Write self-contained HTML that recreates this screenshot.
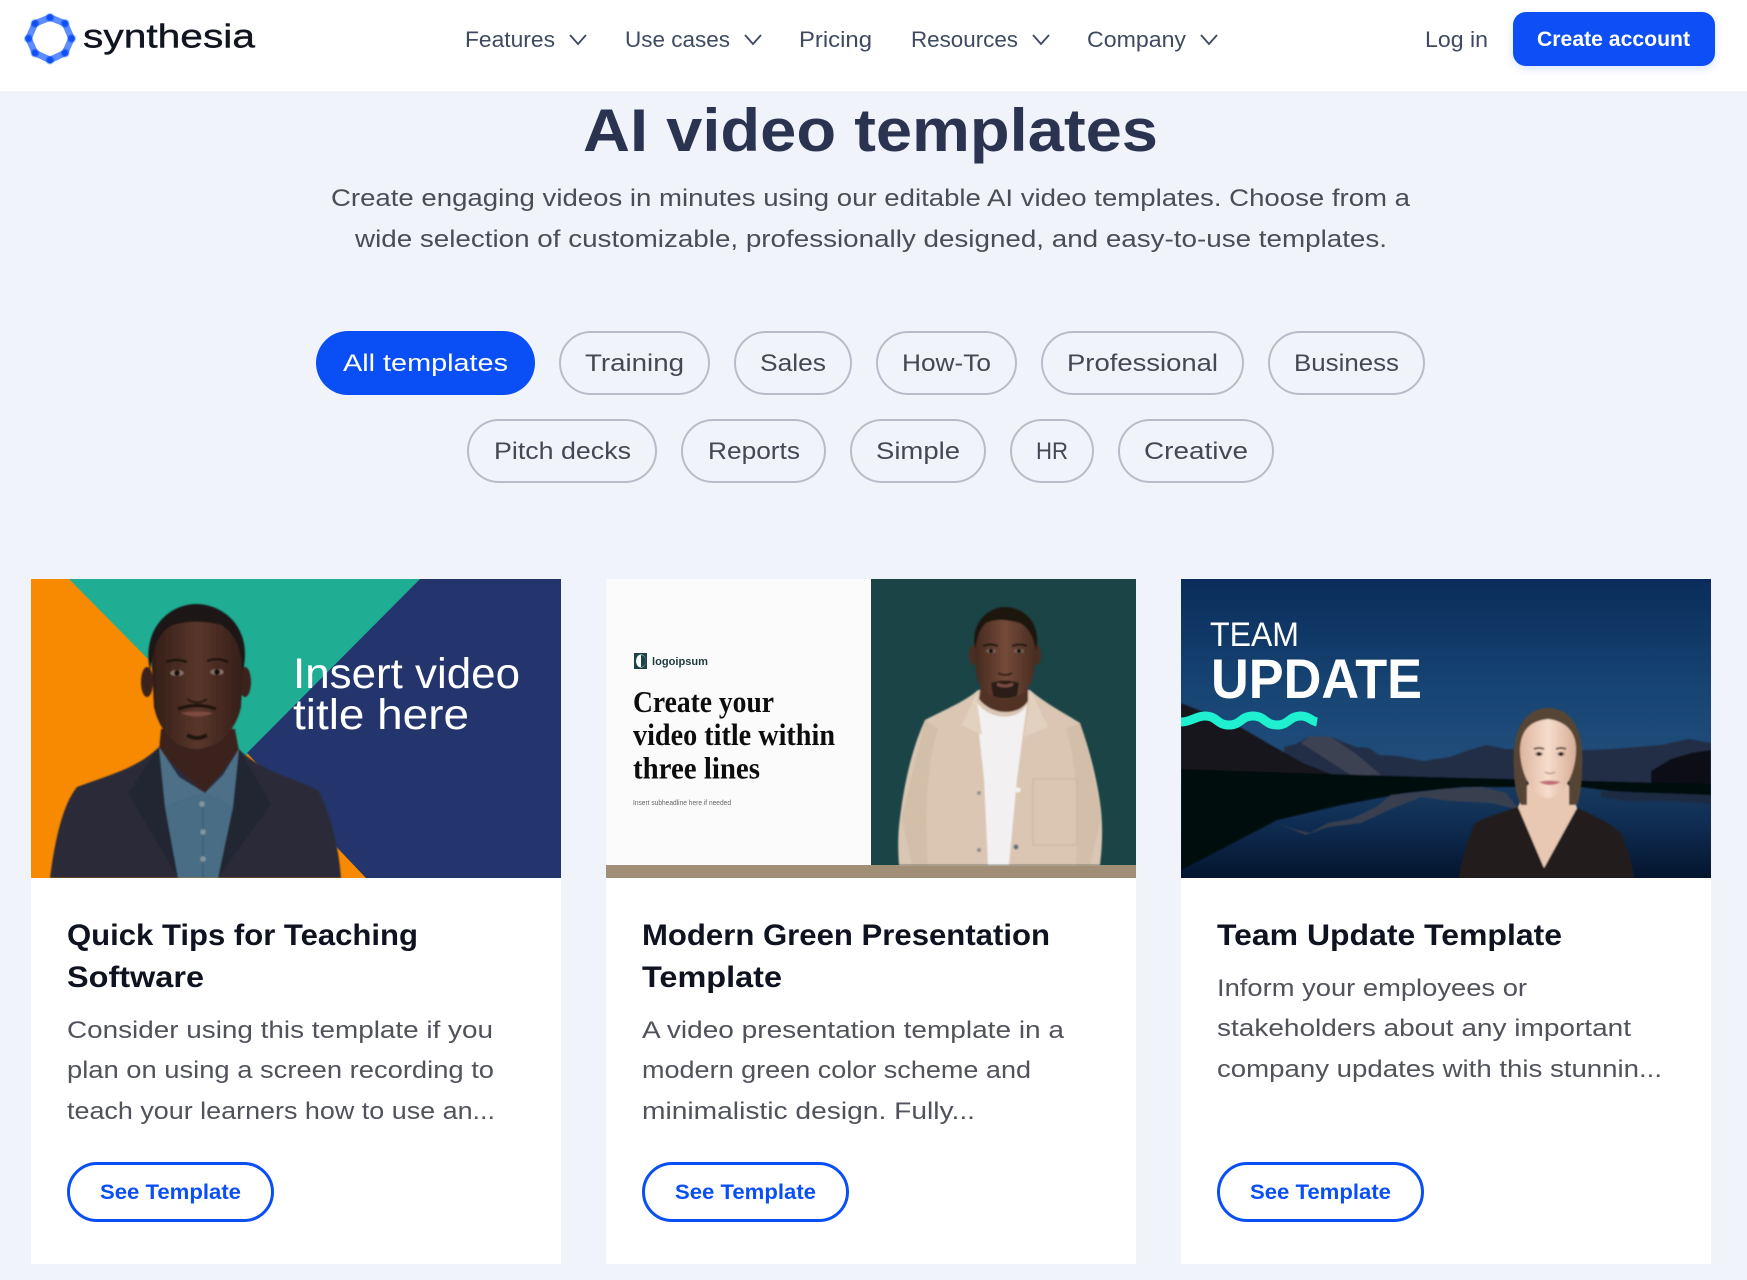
<!DOCTYPE html>
<html lang="en">
<head>
<meta charset="utf-8">
<title>AI video templates</title>
<style>
html,body{margin:0;padding:0;background:#f0f3fa;width:1747px;height:1280px;overflow:hidden}
svg{display:block}
text{font-family:"Liberation Sans",sans-serif}
.nav{font-size:22px;fill:#3f4a60}
.para{font-size:24px;fill:#4a4c58}
.pill{fill:none;stroke:#b8bcc9;stroke-width:2}
.pt{font-size:24px;fill:#454854}
.title{font-size:30px;font-weight:700;fill:#0f1320}
.desc{font-size:24px;fill:#50525c}
.btn{fill:#fff;stroke:#0a4ff5;stroke-width:3}
.bt{font-size:21px;font-weight:700;fill:#0a4ff5}
.chev{fill:none;stroke:#3f4a60;stroke-width:1.8}
</style>
</head>
<body>
<svg width="1747" height="1280" viewBox="0 0 1747 1280" xmlns="http://www.w3.org/2000/svg">
<defs>
<filter id="soft"><feGaussianBlur stdDeviation="0.7"/></filter>
<filter id="soft2"><feGaussianBlur stdDeviation="1.6"/></filter>
<filter id="dot"><feGaussianBlur stdDeviation="0.8"/></filter>
<filter id="shadow" x="-10%" y="-20%" width="120%" height="160%"><feDropShadow dx="0" dy="3" stdDeviation="4" flood-color="#0a4ff5" flood-opacity=".15"/></filter>
<linearGradient id="sky" x1="0" y1="0" x2="0" y2="1"><stop offset="0" stop-color="#0a2c5a"/><stop offset=".55" stop-color="#174574"/><stop offset="1" stop-color="#244f7c"/></linearGradient>
<linearGradient id="water" x1="0" y1="0" x2="0" y2="1"><stop offset="0" stop-color="#1a3d63"/><stop offset=".45" stop-color="#0f2d52"/><stop offset="1" stop-color="#04152e"/></linearGradient>
<linearGradient id="skin1" x1="0" y1="0" x2="1" y2="0"><stop offset="0" stop-color="#321d17"/><stop offset=".5" stop-color="#5a362b"/><stop offset="1" stop-color="#331e18"/></linearGradient>
<linearGradient id="skin2" x1="0" y1="0" x2="1" y2="0"><stop offset="0" stop-color="#44291f"/><stop offset=".5" stop-color="#744a38"/><stop offset="1" stop-color="#472c22"/></linearGradient>
<linearGradient id="skin3" x1="0" y1="0" x2="1" y2="0"><stop offset="0" stop-color="#dcb59e"/><stop offset=".5" stop-color="#f6dccb"/><stop offset="1" stop-color="#d6ad95"/></linearGradient>
</defs>

<rect width="1747" height="1280" fill="#f0f3fa"/>

<!-- header -->
<rect width="1747" height="92" fill="#fff"/>
<rect y="91.5" width="1747" height="1" fill="#e8eaf1"/>
<g>
<polygon points="50,17.5 65,23.5 71.500,38.500 65,53 50,60 35,53 28.500,38.500 35,23.500" fill="none" stroke="#5e8dff" stroke-width="6.500"/>
<g fill="#0a4ff5" filter="url(#dot)">
<circle cx="50" cy="17.500" r="3.800"/><circle cx="65" cy="23.500" r="3.800"/><circle cx="71.500" cy="38.500" r="3.800"/><circle cx="65" cy="53" r="3.800"/><circle cx="50" cy="60" r="3.800"/><circle cx="35" cy="53" r="3.800"/><circle cx="28.500" cy="38.500" r="3.800"/><circle cx="35" cy="23.500" r="3.800"/>
</g>
<text x="83" y="47.500" font-size="33" fill="#10151f" stroke="#10151f" stroke-width=".4" textLength="172" lengthAdjust="spacingAndGlyphs">synthesia</text>
</g>
<text class="nav" x="465" y="47" textLength="90" lengthAdjust="spacingAndGlyphs">Features</text>
<path class="chev" d="M570 35l8 9 8-9"/>
<text class="nav" x="625" y="47" textLength="105" lengthAdjust="spacingAndGlyphs">Use cases</text>
<path class="chev" d="M745 35l8 9 8-9"/>
<text class="nav" x="799" y="47" textLength="73" lengthAdjust="spacingAndGlyphs">Pricing</text>
<text class="nav" x="911" y="47" textLength="107" lengthAdjust="spacingAndGlyphs">Resources</text>
<path class="chev" d="M1033 35l8 9 8-9"/>
<text class="nav" x="1087" y="47" textLength="99" lengthAdjust="spacingAndGlyphs">Company</text>
<path class="chev" d="M1201 35l8 9 8-9"/>
<text class="nav" x="1425" y="47" textLength="63" lengthAdjust="spacingAndGlyphs">Log in</text>
<rect x="1513" y="12" width="202" height="54" rx="13" fill="#0a4ff5" filter="url(#shadow)"/>
<text x="1537" y="46" font-size="21" font-weight="700" fill="#fff" textLength="153" lengthAdjust="spacingAndGlyphs">Create account</text>

<!-- hero -->
<text x="583" y="151" font-size="60" font-weight="700" fill="#2a3450" textLength="575" lengthAdjust="spacingAndGlyphs">AI video templates</text>
<text class="para" x="331" y="206" textLength="1079" lengthAdjust="spacingAndGlyphs">Create engaging videos in minutes using our editable AI video templates. Choose from a</text>
<text class="para" x="355" y="247" textLength="1032" lengthAdjust="spacingAndGlyphs">wide selection of customizable, professionally designed, and easy-to-use templates.</text>

<!-- filter pills -->
<rect x="316" y="331" width="219" height="64" rx="32" fill="#0a4ff5"/>
<text x="343" y="371" font-size="24" fill="#fff" textLength="165" lengthAdjust="spacingAndGlyphs">All templates</text>
<rect class="pill" x="560" y="332" width="149" height="62" rx="31"/>
<text class="pt" x="585" y="371" textLength="99" lengthAdjust="spacingAndGlyphs">Training</text>
<rect class="pill" x="735" y="332" width="116" height="62" rx="31"/>
<text class="pt" x="760" y="371" textLength="66" lengthAdjust="spacingAndGlyphs">Sales</text>
<rect class="pill" x="877" y="332" width="139" height="62" rx="31"/>
<text class="pt" x="902" y="371" textLength="89" lengthAdjust="spacingAndGlyphs">How-To</text>
<rect class="pill" x="1042" y="332" width="201" height="62" rx="31"/>
<text class="pt" x="1067" y="371" textLength="151" lengthAdjust="spacingAndGlyphs">Professional</text>
<rect class="pill" x="1269" y="332" width="155" height="62" rx="31"/>
<text class="pt" x="1294" y="371" textLength="105" lengthAdjust="spacingAndGlyphs">Business</text>

<rect class="pill" x="468" y="420" width="188" height="62" rx="31"/>
<text class="pt" x="494" y="459" textLength="137" lengthAdjust="spacingAndGlyphs">Pitch decks</text>
<rect class="pill" x="682" y="420" width="143" height="62" rx="31"/>
<text class="pt" x="708" y="459" textLength="92" lengthAdjust="spacingAndGlyphs">Reports</text>
<rect class="pill" x="851" y="420" width="134" height="62" rx="31"/>
<text class="pt" x="876" y="459" textLength="84" lengthAdjust="spacingAndGlyphs">Simple</text>
<rect class="pill" x="1011" y="420" width="82" height="62" rx="31"/>
<text class="pt" x="1036" y="459" font-size="25" textLength="32" lengthAdjust="spacingAndGlyphs">HR</text>
<rect class="pill" x="1119" y="420" width="154" height="62" rx="31"/>
<text class="pt" x="1144" y="459" textLength="104" lengthAdjust="spacingAndGlyphs">Creative</text>

<!-- card 1 -->
<rect x="31" y="579" width="530" height="685" fill="#fff"/>
<svg x="31" y="579" width="530" height="299" viewBox="0 0 530 299">
<rect width="530" height="299" fill="#f78a00"/>
<polygon points="38,0 389,0 216,176 165,190 118,81" fill="#1fae93"/>
<polygon points="389,0 530,0 530,299 335,299 216,174" fill="#24356e"/>
<g filter="url(#soft)">
<path d="M19 299 C24 260 32 225 46 208 C80 195 105 190 128 168 L206 168 C225 190 260 198 287 211 C300 235 308 270 310 299Z" fill="#2b2c38"/>
<path d="M130 150 L204 150 L208 172 L174 214 L128 172Z" fill="#3b241d"/>
<path d="M128 168 L134 228 L160 218 L174 214 L148 198Z" fill="#4d7088"/>
<path d="M208 170 L202 228 L174 214 L192 196Z" fill="#4d7088"/>
<polygon points="134,228 160,218 174,214 202,228 187,299 147,299" fill="#4a6d85"/>
<path d="M172 228V299" stroke="#3f5c72" stroke-width="1.500" fill="none"/>
<g fill="#8295a2"><circle cx="171" cy="225" r="2.800"/><circle cx="172" cy="253" r="2.800"/><circle cx="172" cy="280" r="2.800"/></g>
<path d="M128 168 L97 214 L147 299 L134 228Z" fill="#242530"/>
<path d="M208 170 L240 225 L187 299 L202 228Z" fill="#242530"/>
<ellipse cx="116" cy="103" rx="6" ry="15" fill="#3a231c"/>
<ellipse cx="214" cy="103" rx="6" ry="15" fill="#3a231c"/>
<path d="M120 70 C120 40 145 26 165 26 C190 26 213 42 213 75 L210 128 C205 152 186 170 165 170 C145 170 128 152 123 128Z" fill="url(#skin1)"/>
<path d="M119 92 C110 48 140 25 165 25 C192 25 222 48 212 92 C210 70 205 55 190 46 C170 41 150 42 138 48 C125 58 122 72 119 92Z" fill="#1c1512"/>
<path d="M135 83q10-4 21 0M176 82q11-4 21 1" stroke="#1c1210" stroke-width="2.500" fill="none"/>
<ellipse cx="146" cy="94" rx="6.500" ry="3" fill="#8d7468"/><ellipse cx="186" cy="93" rx="6.500" ry="3" fill="#8d7468"/>
<circle cx="146" cy="94" r="3" fill="#120b09"/><circle cx="186" cy="93" r="3" fill="#120b09"/>
<path d="M156 120q10 7 20 0" stroke="#2e1a14" stroke-width="2.500" fill="none"/>
<path d="M147 130q19-7 38 0" stroke="#1e120e" stroke-width="3.500" fill="none"/>
<path d="M150 134q16 7 32 0q-16-3-32 0Z" fill="#7d4b43"/>
<path d="M156 156q10 6 20 0" stroke="#1e120e" stroke-width="4" fill="none"/>
</g>
<text x="262" y="109" font-size="43" fill="#fff" textLength="227" lengthAdjust="spacingAndGlyphs">Insert video</text>
<text x="262" y="150" font-size="43" fill="#fff" textLength="176" lengthAdjust="spacingAndGlyphs">title here</text>
</svg>
<text class="title" x="67" y="945" textLength="351" lengthAdjust="spacingAndGlyphs">Quick Tips for Teaching</text>
<text class="title" x="67" y="987" textLength="137" lengthAdjust="spacingAndGlyphs">Software</text>
<text class="desc" x="67" y="1038" textLength="426" lengthAdjust="spacingAndGlyphs">Consider using this template if you</text>
<text class="desc" x="67" y="1078" textLength="427" lengthAdjust="spacingAndGlyphs">plan on using a screen recording to</text>
<text class="desc" x="67" y="1119" textLength="428" lengthAdjust="spacingAndGlyphs">teach your learners how to use an...</text>
<rect class="btn" x="68.500" y="1163.500" width="204" height="57" rx="28.500"/>
<text class="bt" x="100" y="1199" textLength="141" lengthAdjust="spacingAndGlyphs">See Template</text>

<!-- card 2 -->
<rect x="606" y="579" width="530" height="685" fill="#fff"/>
<svg x="606" y="579" width="530" height="299" viewBox="0 0 530 299">
<rect width="265" height="286" fill="#fbfbfb"/>
<rect x="265" width="265" height="286" fill="#1b4447"/>
<rect y="286" width="530" height="13" fill="#a08f76"/>
<path d="M28 74h13v16h-13z" fill="#1b4447"/><ellipse cx="35" cy="82" rx="5" ry="6.500" fill="#fbfbfb"/><path d="M35 76a5 6 0 0 1 0 12z" fill="#1b4447"/>
<text x="46" y="86" font-size="11" font-weight="700" fill="#1b3b3e" textLength="56" lengthAdjust="spacingAndGlyphs">logoipsum</text>
<text x="27" y="133" font-size="31" font-weight="700" fill="#0d0d0d" style="font-family:'Liberation Serif',serif" textLength="141" lengthAdjust="spacingAndGlyphs">Create your</text>
<text x="27" y="166" font-size="31" font-weight="700" fill="#0d0d0d" style="font-family:'Liberation Serif',serif" textLength="202" lengthAdjust="spacingAndGlyphs">video title within</text>
<text x="27" y="199.500" font-size="31" font-weight="700" fill="#0d0d0d" style="font-family:'Liberation Serif',serif" textLength="127" lengthAdjust="spacingAndGlyphs">three lines</text>
<text x="27" y="226" font-size="7" fill="#666" textLength="98" lengthAdjust="spacingAndGlyphs">Insert subheadline here if needed</text>
<g filter="url(#soft)">
<path d="M293 286 C291 260 293 245 295 231 C300 195 308 165 319 141 C340 130 360 122 372 111 L424 111 C440 125 460 135 474 144 C485 175 492 205 495 231 C497 250 496 270 494 286Z" fill="#dac6b3"/>
<path d="M319 141 C310 180 302 210 296 240 L306 286 L322 286 C318 230 322 180 332 150Z" fill="#d3bea9"/>
<path d="M474 144 C485 180 492 215 495 240 L484 286 L470 286 C474 230 470 180 460 150Z" fill="#d3bea9"/>
<path d="M369 118 C375 140 412 145 421 125 L411 200 L403 286 L382 286 L378 200Z" fill="#f3f0f1"/>
<rect x="427" y="200" width="44" height="66" fill="none" stroke="#c9b5a2" stroke-width="1"/>
<path d="M372 111 L356 146 L376 156 L371 121Z" fill="#e3d1c0"/>
<path d="M424 111 L442 148 L418 158 L423 128Z" fill="#e3d1c0"/>
<path d="M376 95 L422 95 L422 122 C412 138 385 136 373 120Z" fill="#533326"/>
<ellipse cx="367" cy="76" rx="4" ry="10" fill="#4a2e22"/><ellipse cx="431" cy="76" rx="4" ry="10" fill="#4a2e22"/>
<path d="M369 60 C372 38 385 30 399 30 C415 30 428 40 430 62 L428 95 C424 112 412 120 399 120 C386 120 373 112 370 95Z" fill="url(#skin2)"/>
<path d="M369 70 C364 44 382 28 399 28 C418 28 436 44 430 72 C428 58 422 48 414 44 C400 40 388 40 380 44 C373 50 371 60 369 70Z" fill="#1b1310"/>
<path d="M377 67q8-3 15 0M406 67q8-3 15 0" stroke="#1b1310" stroke-width="2" fill="none"/>
<ellipse cx="385" cy="72" rx="5" ry="2.200" fill="#7a6558"/><ellipse cx="413" cy="72" rx="5" ry="2.200" fill="#7a6558"/>
<circle cx="385" cy="72" r="2.200" fill="#0f0a08"/><circle cx="413" cy="72" r="2.200" fill="#0f0a08"/>
<path d="M392 94q7 4 14 0" stroke="#34201a" stroke-width="2" fill="none"/>
<path d="M385 104q14-5 28 0l-2 13q-12 5-24 0Z" fill="#2a1a14"/>
<path d="M391 105q8 4 16 0" stroke="#7a4c42" stroke-width="3" fill="none"/>
<circle cx="373" cy="214" r="2" fill="#9a948d"/><circle cx="412" cy="211" r="2.500" fill="#f4f4f4"/><circle cx="373" cy="271" r="2" fill="#8a8a85"/><circle cx="410" cy="268" r="2.500" fill="#5f7178"/>
</g>
</svg>
<text class="title" x="642" y="945" textLength="408" lengthAdjust="spacingAndGlyphs">Modern Green Presentation</text>
<text class="title" x="642" y="987" textLength="140" lengthAdjust="spacingAndGlyphs">Template</text>
<text class="desc" x="642" y="1038" textLength="422" lengthAdjust="spacingAndGlyphs">A video presentation template in a</text>
<text class="desc" x="642" y="1078" textLength="389" lengthAdjust="spacingAndGlyphs">modern green color scheme and</text>
<text class="desc" x="642" y="1119" textLength="333" lengthAdjust="spacingAndGlyphs">minimalistic design. Fully...</text>
<rect class="btn" x="643.500" y="1163.500" width="204" height="57" rx="28.500"/>
<text class="bt" x="675" y="1199" textLength="141" lengthAdjust="spacingAndGlyphs">See Template</text>

<!-- card 3 -->
<rect x="1181" y="579" width="530" height="685" fill="#fff"/>
<svg x="1181" y="579" width="530" height="299" viewBox="0 0 530 299">
<rect width="530" height="205" fill="url(#sky)"/>
<rect y="200" width="530" height="99" fill="url(#water)"/>
<g filter="url(#soft)">
<polygon points="103,168 115,165 129,157 140,159 150,158 162,163 175,168 188,169 198,176 217,177 232,180 243,182 255,180 269,178 285,172 305,166 325,170 345,170 375,172 409,171 430,170 456,168 480,166 508,160 530,164 530,205 103,205" fill="#212d45"/>
<polygon points="120,164 129,157 150,158 175,175 200,196 170,196 145,180" fill="#3d4353"/>
<polygon points="470,192 490,180 510,174 530,171 530,208 470,208" fill="#0a0f15"/>
<polygon points="0,124 30,136 59,148 90,166 122,184 150,195 0,200" fill="#13171e"/>
<polygon points="0,190 150,195 250,198 530,205 530,224 490,216 430,212 400,208 283,208 224,214 160,226 96,241 0,291" fill="#04070b"/>
<polygon points="96,244 112,250 129,254 147,244 170,240 195,228 210,216 240,213 262,210 300,208 325,214 339,231 310,224 270,222 240,218 210,230 180,244 147,248 125,256 110,250" fill="#39414f"/>
<polygon points="420,212 530,216 530,225 490,222 445,222 420,218" fill="#1c2a42"/>
</g>
<text x="29" y="67" font-size="34" fill="#fff" textLength="89" lengthAdjust="spacingAndGlyphs">TEAM</text>
<text x="30" y="119" font-size="56" font-weight="700" fill="#fff" textLength="211" lengthAdjust="spacingAndGlyphs">UPDATE</text>
<path d="M0 143 C10 143 15 137 24 137 C36 137 36 146 48 146 C60 146 60 137 72 137 C84 137 84 146 96 146 C108 146 108 137 120 137 C128 137 130 142 136 143" fill="none" stroke="#1ef0d0" stroke-width="9"/>
<g filter="url(#soft)">
<path d="M278 299 C282 275 288 258 294 244 C310 236 325 232 337 228 L396 229 C415 237 430 245 440 254 C447 270 451 285 453 299Z" fill="#241f1e"/>
<path d="M347 205 L387 205 L396 229 L363 289 L337 228Z" fill="#e9c8b3"/>
<path d="M333 190 C330 150 345 129 367 129 C390 129 404 150 401 190 C401 205 399 218 396 226 L388 226 L388 190 L346 190 L346 226 L340 226 C335 215 333 205 333 190Z" fill="#574436"/>
<path d="M339 170 C340 150 350 142 367 140 C384 142 395 152 395 170 C395 195 382 219 367 219 C352 219 339 195 339 170Z" fill="url(#skin3)"/>
<path d="M353 170q5-2 10 0M375 170q5-2 10 0" stroke="#5a4238" stroke-width="1.800" fill="none"/>
<ellipse cx="358" cy="175" rx="4" ry="2" fill="#a0887a"/><ellipse cx="380" cy="175" rx="4" ry="2" fill="#a0887a"/>
<circle cx="358" cy="175" r="2" fill="#2b1f19"/><circle cx="380" cy="175" r="2" fill="#2b1f19"/>
<path d="M364 193q5 3 10 0" stroke="#c19a84" stroke-width="1.500" fill="none"/>
<path d="M358 203q11-3 22 0q-11 6-22 0Z" fill="#c0727a"/>
</g>
</svg>
<text class="title" x="1217" y="945" textLength="345" lengthAdjust="spacingAndGlyphs">Team Update Template</text>
<text class="desc" x="1217" y="996" textLength="310" lengthAdjust="spacingAndGlyphs">Inform your employees or</text>
<text class="desc" x="1217" y="1036" textLength="414" lengthAdjust="spacingAndGlyphs">stakeholders about any important</text>
<text class="desc" x="1217" y="1077" textLength="445" lengthAdjust="spacingAndGlyphs">company updates with this stunnin...</text>
<rect class="btn" x="1218.500" y="1163.500" width="204" height="57" rx="28.500"/>
<text class="bt" x="1250" y="1199" textLength="141" lengthAdjust="spacingAndGlyphs">See Template</text>
</svg>
</body>
</html>
